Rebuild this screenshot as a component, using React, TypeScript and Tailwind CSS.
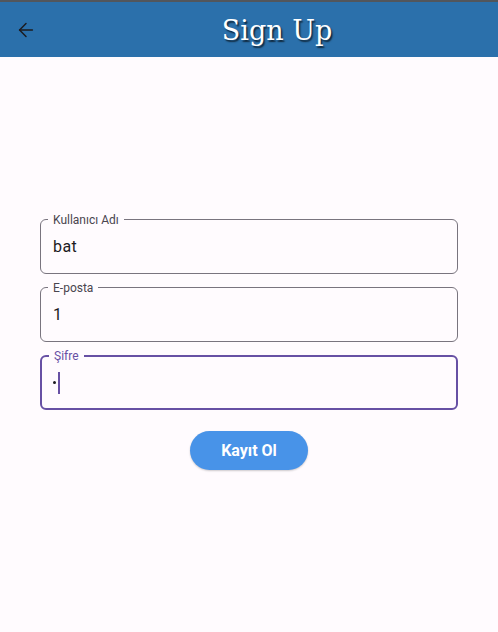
import { ArrowLeft } from 'lucide-react';

interface FieldProps {
  label: string;
  value?: string;
  focused?: boolean;
}

function Field({ label, value, focused }: FieldProps) {
  return (
    <div
      className={`relative flex h-[55px] items-center rounded-[6px] px-3 ${
        focused ? 'border-2 border-[#6750a4] px-[11px]' : 'border border-[#79747e]'
      }`}
    >
      <span
        className={`absolute left-[7px] bg-[#fffbfe] px-[5px] text-[12px] leading-4 ${
          focused ? '-top-[9px] text-[#6750a4]' : '-top-[8px] text-[#49454f]'
        }`}
      >
        {label}
      </span>
      {focused ? (
        <div className="flex items-center">
          <span className="mr-[2px] h-[3px] w-[3px] rounded-full bg-[#1c1b1f]" />
          <span className="h-[22px] w-[2px] bg-[#6750a4]" />
        </div>
      ) : (
        <span className="pt-[1px] text-[16px] tracking-[0.4px] text-[#1c1b1f]">{value}</span>
      )}
    </div>
  );
}

export default function App() {
  return (
    <div className="flex h-[632px] w-[498px] flex-col bg-[#fffbfe] font-['Roboto',sans-serif]">
      <header className="flex h-[57px] items-center border-t-2 border-[#52565c] bg-[#2b70ab]">
        <button className="flex h-[55px] w-[56px] items-center justify-center pr-[4px] pt-[1px] text-[#1c1b1f]">
          <ArrowLeft size={22} strokeWidth={1.6} />
        </button>
        <h1 className="flex-1 pt-[4px] text-center font-['DejaVu_Serif',serif] text-[27px] text-white [text-shadow:1.5px_1.5px_1.5px_rgba(0,0,0,0.65)]">
          Sign Up
        </h1>
      </header>
      <main className="flex flex-col px-10 pt-[162px]">
        <div className="flex flex-col gap-[13px]">
          <Field label="Kullanıcı Adı" value="bat" />
          <Field label="E-posta" value="1" />
          <Field label="Şifre" focused />
        </div>
        <div className="mt-[21px] flex justify-center">
          <button className="h-[39px] w-[118px] rounded-full bg-[#4893e8] text-[16px] font-bold text-white shadow-[0_1px_2px_rgba(0,0,0,0.2)]">
            Kayıt Ol
          </button>
        </div>
      </main>
    </div>
  );
}
